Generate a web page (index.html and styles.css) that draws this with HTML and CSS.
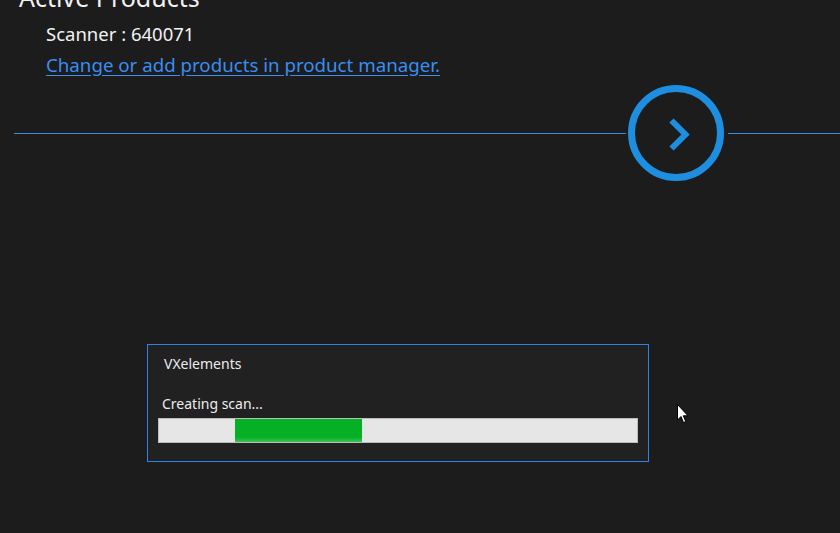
FILE: index.html
```html
<!DOCTYPE html>
<html lang="en">
<head>
<meta charset="utf-8">
<title>Active Products</title>
<link rel="stylesheet" href="styles.css">
</head>
<body>
<main class="page">
  <section class="products">
    <h1 class="title">Active Products</h1>
    <div class="scanner">Scanner : 640071</div>
    <a class="link" href="#">Change or add products in product manager.</a>
  </section>

  <div class="divider">
    <span class="line"></span>
    <button class="next" type="button" aria-label="Next">
      <svg width="96" height="96" viewBox="0 0 96 96">
        <circle cx="48" cy="48" r="44.5" fill="none" stroke="#1e8fe0" stroke-width="7"/>
        <polyline points="43.5,35.5 57.5,49.5 43.5,63.5" fill="none" stroke="#1e8fe0" stroke-width="6" stroke-linecap="butt" stroke-linejoin="miter"/>
      </svg>
    </button>
    <span class="line tail"></span>
  </div>

  <div class="dialog">
    <div class="dialog-title">VXelements</div>
    <div class="dialog-status">Creating scan...</div>
    <div class="progress">
      <div class="progress-fill" style="margin-left: 76px; width: 127px;"></div>
    </div>
  </div>
</main>

<svg class="cursor" width="13" height="20" viewBox="0 0 13 20">
  <path d="M0.5 0.5 L0.5 16 L4 12.5 L6.5 18.5 L8.8 17.5 L6.3 11.8 L11 11.8 Z" fill="#ffffff" stroke="#000000" stroke-width="1"/>
</svg>
</body>
</html>
```

FILE: styles.css
```css
* { box-sizing: border-box; }

html, body {
  margin: 0;
  padding: 0;
  background: #1c1c1c;
  width: 840px;
  height: 533px;
  overflow: hidden;
}

body {
  font-family: "Noto Sans", "Open Sans", sans-serif;
  color: #f2f2f2;
  position: relative;
}

.page {
  display: flex;
  flex-direction: column;
}

.products {
  display: flex;
  flex-direction: column;
  align-items: flex-start;
  padding-left: 19px;
}

.title {
  margin: -18px 0 0 0;
  height: 30px;
  font-size: 25px;
  line-height: 30px;
  font-weight: 400;
  color: #f2f2f2;
}

.scanner {
  margin-left: 27px;
  margin-top: 10px;
  height: 24px;
  font-size: 18.5px;
  line-height: 24px;
  color: #f2f2f2;
}

.link {
  margin-left: 27px;
  margin-top: 7px;
  height: 24px;
  font-size: 18.7px;
  line-height: 24px;
  color: #3a8ef0;
  text-decoration: underline;
  text-underline-offset: 3px;
}

.divider {
  display: flex;
  align-items: center;
  margin-top: 8px;
  padding-left: 14px;
  height: 96px;
}

.line {
  height: 1px;
  background: #3a8fd8;
  flex: 1;
  margin-right: 2px;
}

.line.tail {
  margin-right: 0;
  margin-left: 4px;
  flex: 0 0 112px;
}

.next {
  border: 0;
  padding: 0;
  background: transparent;
  width: 96px;
  height: 96px;
  display: block;
  cursor: pointer;
}

.next svg { display: block; }

.dialog {
  margin-top: 163px;
  margin-left: 147px;
  width: 502px;
  height: 118px;
  border: 1px solid #2f83e6;
  background: #212121;
  display: flex;
  flex-direction: column;
  padding: 9px 10px 0 10px;
}

.dialog-title {
  padding-left: 6px;
  font-size: 14px;
  line-height: 20px;
  height: 20px;
  color: #ececec;
}

.dialog-status {
  margin-top: 20px;
  padding-left: 4px;
  font-size: 14px;
  line-height: 20px;
  height: 20px;
  color: #ececec;
}

.progress {
  margin-top: 4px;
  width: 480px;
  height: 25px;
  border: 1px solid #bcbcbc;
  background: #e6e6e6;
  display: flex;
}

.progress-fill {
  height: 100%;
  background: linear-gradient(to bottom, #06b025 0%, #06b025 80%, #3cc257 100%);
}

.cursor {
  position: absolute;
  left: 677px;
  top: 404px;
}
```
